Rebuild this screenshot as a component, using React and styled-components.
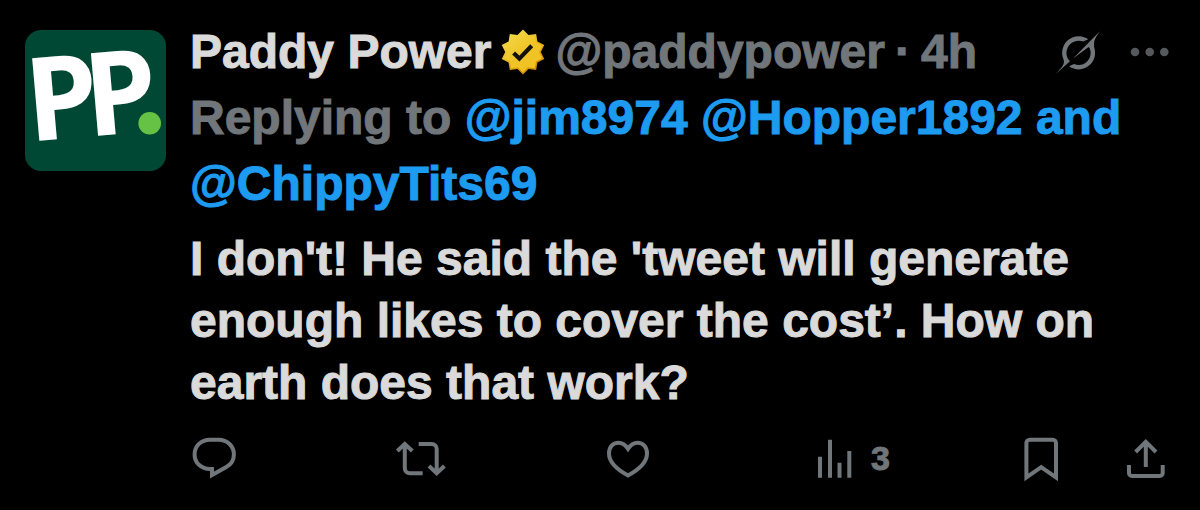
import styled, { createGlobalStyle, ThemeProvider } from "styled-components"

const theme = {
    color: {
        background: "#000000",
        text: "#dadada",
        muted: "#71767b",
        faint: "#55585c",
        link: "#1d9bf0",
        brand: "#004833",
        brandDot: "#66c245",
    },
    font: {
        body: '"Liberation Sans", Arial, sans-serif',
        logo: '"Open Sans", sans-serif',
    },
}

const GlobalStyle = createGlobalStyle`
    * {
        box-sizing: border-box;
    }
    body {
        margin: 0;
        background: ${theme.color.background};
    }
`

const Post = styled.article`
    display: flex;
    gap: 24px;
    padding: 19px 30px 28px 25px;
    background: ${(props) => props.theme.color.background};
    color: ${(props) => props.theme.color.text};
    font-family: ${(props) => props.theme.font.body};
    font-size: 48px;
    font-weight: 700;
    line-height: 66px;
    -webkit-text-stroke: 1px currentColor;
`

const AvatarLink = styled.a`
    flex: none;
    width: 141px;
    height: 141px;
    margin-top: 11px;
    border-radius: 16px;
    background: ${(props) => props.theme.color.brand};
`

const LogoLetter = styled.text`
    font-family: ${(props) => props.theme.font.logo};
    font-size: 116px;
    font-weight: 700;
    fill: white;
    -webkit-text-stroke: 0;
`

const Content = styled.div`
    flex: 1;
    min-width: 0;
`

const Header = styled.header`
    display: flex;
    align-items: center;
    gap: 10px;
    white-space: nowrap;
`

const Author = styled.a`
    color: inherit;
    text-decoration: none;
`

const Meta = styled.div`
    display: flex;
    gap: 10px;
    color: ${(props) => props.theme.color.muted};
    -webkit-text-stroke: 1px ${(props) => props.theme.color.muted};
`

const HeaderActions = styled.div`
    display: flex;
    align-items: center;
    gap: 30px;
    margin-left: auto;
`

const IconButton = styled.button`
    display: flex;
    align-items: center;
    gap: 12px;
    padding: 0;
    border: 0;
    background: none;
    color: ${(props) =>
        props.$faint ? props.theme.color.faint : props.theme.color.muted};
    font: inherit;
    font-size: 34px;
    line-height: 48px;
    cursor: pointer;
`

const Icon = styled.svg`
    display: block;
    flex: none;
    overflow: visible;
`

const LineIcon = styled(Icon)`
    width: 48px;
    height: 48px;
    fill: none;
    stroke: currentColor;
    stroke-width: 4;
`

const ReplyingTo = styled.p`
    margin: 0;
    color: ${(props) => props.theme.color.muted};
`

const Mentions = styled.span`
    color: ${(props) => props.theme.color.link};
    -webkit-text-stroke: 1px ${(props) => props.theme.color.link};
`

const MentionLink = styled.a`
    color: inherit;
    text-decoration: none;
`

const Message = styled.p`
    margin: 11px 0 20px;
    line-height: 62px;
`

const Actions = styled.footer`
    display: grid;
    grid-template-columns: repeat(4, 1fr) auto;
`

const ActionGroup = styled.div`
    display: flex;
    gap: 56px;
`

// ten pointed seal, outer and inner radius alternate
const sealPoints = Array.from({ length: 20 }, (_, i) => {
    const radius = i % 2 ? 17.8 : 22.4
    const angle = (i * Math.PI) / 10
    const x = 22 + radius * Math.sin(angle)
    const y = 22 - radius * Math.cos(angle)
    return `${x.toFixed(2)},${y.toFixed(2)}`
}).join(" ")

const Avatar = () => (
    <AvatarLink href="#profile" aria-label="Paddy Power">
        <Icon width="141" height="141" viewBox="0 0 141 141">
            <g transform="translate(14 111) rotate(-5)">
                <LogoLetter x="-10">P</LogoLetter>
                <LogoLetter x="49">P</LogoLetter>
            </g>
            <circle cx="124.7" cy="93.3" r="11.3" fill={theme.color.brandDot} />
        </Icon>
    </AvatarLink>
)

const VerifiedBadge = () => (
    <Icon width="44" height="44" viewBox="0 0 44 44" role="img" aria-label="Verified">
        <defs>
            <linearGradient id="sealEdge" x1="0.2" y1="0" x2="0.8" y2="1">
                <stop offset="0" stopColor="#f6e05a" />
                <stop offset="0.6" stopColor="#e3a912" />
                <stop offset="1" stopColor="#c87f0a" />
            </linearGradient>
            <linearGradient id="sealFace" x1="0.1" y1="0" x2="0.9" y2="1">
                <stop offset="0" stopColor="#f3d844" />
                <stop offset="0.5" stopColor="#efc429" />
                <stop offset="1" stopColor="#f0c21c" />
            </linearGradient>
        </defs>
        <polygon points={sealPoints} fill="url(#sealEdge)" />
        <polygon
            points={sealPoints}
            fill="url(#sealFace)"
            transform="translate(22 22) scale(0.9) translate(-22 -22)"
        />
        <path d="M12.6 23l5.8 5.6L30.7 15.8" fill="none" stroke="#14110a" strokeWidth="4.2" />
    </Icon>
)

const GrokIcon = () => (
    <Icon width="44" height="43" viewBox="0 0 33 32" fill="currentColor">
        <path d="M12.745 20.54l10.97-8.19c.539-.4 1.307-.244 1.564.38 1.349 3.288.746 7.241-1.938 9.955-2.683 2.714-6.417 3.31-9.83 1.954l-3.728 1.745c5.347 3.697 11.84 2.782 15.898-1.324 3.219-3.255 4.216-7.692 3.284-11.693l.008.009c-1.351-5.878.332-8.227 3.782-13.031L33 0l-4.54 4.59v-.014L12.743 20.544m-2.263 1.987c-3.837-3.707-3.175-9.446.1-12.755 2.42-2.449 6.388-3.448 9.852-1.979l3.72-1.737c-.67-.49-1.53-1.017-2.515-1.387-4.455-1.854-9.789-.931-13.41 2.728-3.483 3.523-4.579 8.94-2.697 13.561 1.405 3.454-.899 5.898-3.22 8.364C1.49 30.2.666 31.074 0 32l10.478-9.466" />
    </Icon>
)

const MoreIcon = () => (
    <Icon width="40" height="10" viewBox="0 0 40 10" fill="currentColor">
        <circle cx="5" cy="5" r="4.3" />
        <circle cx="19.7" cy="5" r="4.3" />
        <circle cx="34.3" cy="5" r="4.3" />
    </Icon>
)

const ReplyIcon = () => (
    <LineIcon viewBox="0 0 48 48">
        <path d="M20 5.7h8.5c9 0 15.4 6.5 15.4 14.8 0 5.5-3 10-7.6 12.5L22 41v-6h-2C11 35 4.6 28.7 4.6 20.4S11 5.7 20 5.7z" />
    </LineIcon>
)

const RepostIcon = () => (
    <LineIcon viewBox="0 0 48 48">
        <path d="M.3 17L7.8 10l7.5 7M7.8 11v23.3a5 5 0 0 0 5 5h12.9" />
        <path d="M21.7 10h13a5 5 0 0 1 5 5v23.5M32 32l7.7 7.2 7.7-7.2" />
    </LineIcon>
)

const LikeIcon = () => (
    <LineIcon viewBox="0 0 48 48">
        <path d="M24 14.8c-2.8-4.3-6.2-6.1-9.6-6.1C9 8.7 5 13 5 19.4 5 28 12.8 35.3 24 41.4c11.2-6.1 19-13.4 19-22 0-6.4-4-10.7-9.4-10.7-3.4 0-6.8 1.8-9.6 6.1z" />
    </LineIcon>
)

const ViewsIcon = () => (
    <LineIcon viewBox="0 0 48 48">
        <path d="M9 22.7v21M19 5.7v38M28.5 28.7v15M38.3 17v26.7" />
    </LineIcon>
)

const BookmarkIcon = () => (
    <LineIcon viewBox="0 0 48 48">
        <path d="M8.4 43.4V9a3.3 3.3 0 0 1 3.3-3.3h23A3.3 3.3 0 0 1 38 9v34.4L23.2 33.2z" />
    </LineIcon>
)

const ShareIcon = () => (
    <LineIcon viewBox="0 0 48 48">
        <path d="M13.6 18L23.8 7.9 34 18M23.8 8v25M7 31v8a3 3 0 0 0 3 3h27.7a3 3 0 0 0 3-3v-8" />
    </LineIcon>
)

const App = () => (
    <ThemeProvider theme={theme}>
        <GlobalStyle />
        <Post>
            <Avatar />
            <Content>
                <Header>
                    <Author href="#profile">Paddy Power</Author>
                    <VerifiedBadge />
                    <Meta>
                        <Author href="#profile">@paddypower</Author>
                        <span>·</span>
                        <time>4h</time>
                    </Meta>
                    <HeaderActions>
                        <IconButton aria-label="Grok">
                            <GrokIcon />
                        </IconButton>
                        <IconButton aria-label="More" $faint>
                            <MoreIcon />
                        </IconButton>
                    </HeaderActions>
                </Header>
                <ReplyingTo>
                    Replying to{" "}
                    <Mentions>
                        <MentionLink href="#jim8974">@jim8974</MentionLink>{" "}
                        <MentionLink href="#Hopper1892">@Hopper1892</MentionLink> and{" "}
                        <MentionLink href="#ChippyTits69">@ChippyTits69</MentionLink>
                    </Mentions>
                </ReplyingTo>
                <Message>
                    I don't! He said the 'tweet will generate enough likes to cover the
                    cost’. How on earth does that work?
                </Message>
                <Actions>
                    <IconButton aria-label="Reply">
                        <ReplyIcon />
                    </IconButton>
                    <IconButton aria-label="Repost">
                        <RepostIcon />
                    </IconButton>
                    <IconButton aria-label="Like">
                        <LikeIcon />
                    </IconButton>
                    <IconButton aria-label="3 views">
                        <ViewsIcon />
                        <span>3</span>
                    </IconButton>
                    <ActionGroup>
                        <IconButton aria-label="Bookmark">
                            <BookmarkIcon />
                        </IconButton>
                        <IconButton aria-label="Share">
                            <ShareIcon />
                        </IconButton>
                    </ActionGroup>
                </Actions>
            </Content>
        </Post>
    </ThemeProvider>
)

export default App
